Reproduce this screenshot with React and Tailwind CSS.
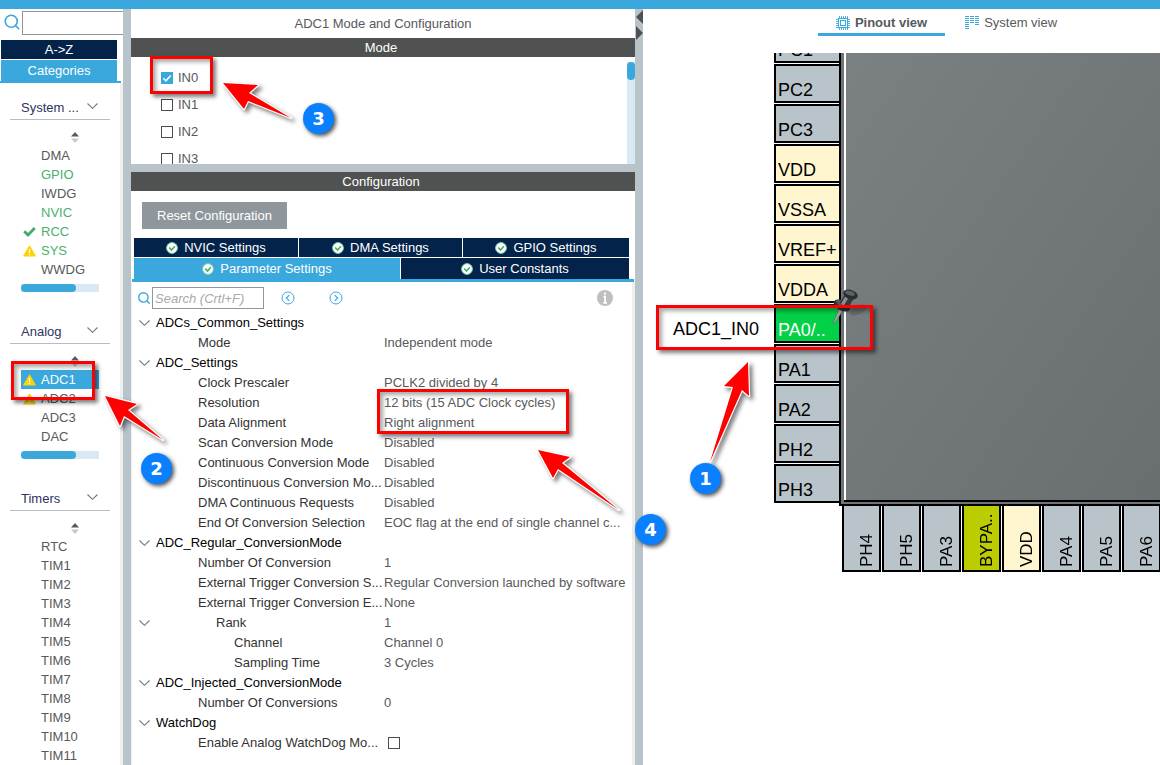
import { Search } from "lucide-react";

const GROUPS = [
  {
    name: "System ...",
    scrollbar: true,
    items: [
      { name: "DMA" },
      { name: "GPIO", used: true },
      { name: "IWDG" },
      { name: "NVIC", used: true },
      { name: "RCC", used: true, icon: "check" },
      { name: "SYS", used: true, icon: "warn" },
      { name: "WWDG" },
    ],
  },
  {
    name: "Analog",
    scrollbar: true,
    items: [
      { name: "ADC1", icon: "warn", selected: true },
      { name: "ADC2", icon: "warn" },
      { name: "ADC3" },
      { name: "DAC" },
    ],
  },
  {
    name: "Timers",
    items: ["RTC", "TIM1", "TIM2", "TIM3", "TIM4", "TIM5", "TIM6", "TIM7", "TIM8", "TIM9", "TIM10", "TIM11"].map((name) => ({ name })),
  },
];

const PARAMS = [
  { label: "ADCs_Common_Settings", level: 0, open: true },
  { label: "Mode", level: 1, value: "Independent mode" },
  { label: "ADC_Settings", level: 0, open: true },
  { label: "Clock Prescaler", level: 1, value: "PCLK2 divided by 4" },
  { label: "Resolution", level: 1, value: "12 bits (15 ADC Clock cycles)" },
  { label: "Data Alignment", level: 1, value: "Right alignment" },
  { label: "Scan Conversion Mode", level: 1, value: "Disabled" },
  { label: "Continuous Conversion Mode", level: 1, value: "Disabled" },
  { label: "Discontinuous Conversion Mo...", level: 1, value: "Disabled" },
  { label: "DMA Continuous Requests", level: 1, value: "Disabled" },
  { label: "End Of Conversion Selection", level: 1, value: "EOC flag at the end of single channel c..." },
  { label: "ADC_Regular_ConversionMode", level: 0, open: true },
  { label: "Number Of Conversion", level: 1, value: "1" },
  { label: "External Trigger Conversion S...", level: 1, value: "Regular Conversion launched by software" },
  { label: "External Trigger Conversion E...", level: 1, value: "None" },
  { label: "Rank", level: 2, value: "1", open: true },
  { label: "Channel", level: 3, value: "Channel 0" },
  { label: "Sampling Time", level: 3, value: "3 Cycles" },
  { label: "ADC_Injected_ConversionMode", level: 0, open: true },
  { label: "Number Of Conversions", level: 1, value: "0" },
  { label: "WatchDog", level: 0, open: true },
  { label: "Enable Analog WatchDog Mo...", level: 1, checkbox: true },
];

const INDENT = ["pl-[7px]", "pl-[49px]", "pl-[67px]", "pl-[85px]"];

const PIN_COLORS = {
  io: "bg-[#b9c4ca] text-black",
  power: "bg-[#fff6cf] text-black",
  active: "bg-[#02d046] text-white",
  special: "bg-[#bbcc00] text-black",
};

const LEFT_PINS = [
  { name: "PC1", kind: "io" },
  { name: "PC2", kind: "io" },
  { name: "PC3", kind: "io" },
  { name: "VDD", kind: "power" },
  { name: "VSSA", kind: "power" },
  { name: "VREF+", kind: "power" },
  { name: "VDDA", kind: "power" },
  { name: "PA0/..", kind: "active", signal: "ADC1_IN0" },
  { name: "PA1", kind: "io" },
  { name: "PA2", kind: "io" },
  { name: "PH2", kind: "io" },
  { name: "PH3", kind: "io" },
];

const BOTTOM_PINS = [
  { name: "PH4", kind: "io" },
  { name: "PH5", kind: "io" },
  { name: "PA3", kind: "io" },
  { name: "BYPA..", kind: "special" },
  { name: "VDD", kind: "power" },
  { name: "PA4", kind: "io" },
  { name: "PA5", kind: "io" },
  { name: "PA6", kind: "io" },
];

function Chevron() {
  return (
    <svg className="w-[11px] h-[6px] shrink-0" viewBox="0 0 11 6" fill="none" stroke="#77797a" strokeWidth="1.1">
      <path d="M.5.5l5 4.8 5-4.8" />
    </svg>
  );
}

function Warning() {
  return (
    <svg className="w-[13px] h-[12px]" viewBox="0 0 13 12">
      <path d="M6.5.8L12.4 11H.6z" fill="#fdd208" stroke="#fdd208" strokeWidth="1" strokeLinejoin="round" />
      <path d="M6.5 4v4M6.5 9v1.3" stroke="#fff" strokeWidth="1.2" />
    </svg>
  );
}

function Check() {
  return (
    <svg className="w-[13px] h-[10px]" viewBox="0 0 13 10" fill="none" stroke="#3eac6c" strokeWidth="2.8">
      <path d="M1.2 4.2l3.8 3.8 6.8-7" />
    </svg>
  );
}

function StatusOk() {
  return (
    <svg className="w-3 h-3 shrink-0" viewBox="0 0 12 12" fill="none">
      <circle cx="6" cy="6" r="5.4" fill="#fff" stroke="#7fd0a0" strokeWidth="1" />
      <path d="M3.2 5.6l2.3 2.5 3.4-3.8" stroke="#3eac6c" strokeWidth="1.5" />
    </svg>
  );
}

function Sorter() {
  return (
    <svg className="w-2 h-[11px]" viewBox="0 0 8 11">
      <path d="M4 0l4 4.5H0z" fill="#58595b" />
      <path d="M0 6.5h8L4 11z" fill="#c6c8c9" />
    </svg>
  );
}

function Group({ group }) {
  return (
    <section className="shrink-0">
      <button className="flex items-center justify-between w-[100px] h-6 ml-[10px] pl-[11px] pr-3 border-b border-[#b3bfc7] text-[#2b3560]">
        {group.name}
        <span className="pb-1">
          <Chevron />
        </span>
      </button>
      <div className="h-[26px] pl-[71px] pt-3">
        <Sorter />
      </div>
      <ul>
        {group.items.map((it) => (
          <li
            key={it.name}
            className={`flex items-center h-[19px] ml-[21px] w-[78px] ${
              it.selected ? "bg-[#3aa8dc] text-white" : it.used ? "text-[#49b170]" : "text-[#58595b]"
            }`}
          >
            <span className="w-5 pl-[2px] shrink-0">
              {it.icon === "warn" && <Warning />}
              {it.icon === "check" && <Check />}
            </span>
            {it.name}
          </li>
        ))}
      </ul>
      {group.scrollbar && (
        <div className="mt-[5px] mb-7 ml-[21px] w-[78px] h-2 bg-[#d9e8f5]">
          <div className="w-[55px] h-2 rounded-full bg-[#3aa8dc]" />
        </div>
      )}
    </section>
  );
}

function Sidebar() {
  return (
    <aside className="flex flex-col min-h-0 overflow-hidden">
      <div className="flex items-start h-[31px] shrink-0 pt-[2px] pl-[3px]">
        <label htmlFor="ip-search" className="w-[19px] shrink-0 pt-[2px] text-[#3aa8dc]">
          <Search size={18} strokeWidth={2.2} />
        </label>
        <input id="ip-search" aria-label="Search" className="h-6 w-[120px] shrink-0 border border-[#8f969b] bg-white" />
      </div>
      <div className="flex flex-col shrink-0 gap-px text-white border-b-2 border-[#3aa8dc] mr-[2px]">
        <button className="h-[19px] ml-px mr-1 pt-px bg-[#03234b]">A-&gt;Z</button>
        <button className="h-[21px] ml-px mr-1 bg-[#3aa8dc]">Categories</button>
      </div>
      <div className="flex-1 min-h-0 pt-[13px] border-r-[3px] border-[#efefef] overflow-hidden">
        {GROUPS.map((g) => (
          <Group key={g.name} group={g} />
        ))}
      </div>
    </aside>
  );
}

function CheckInput({ id, label, checked }) {
  return (
    <span className="relative inline-flex w-3 h-3 shrink-0">
      <input
        id={id}
        aria-label={label}
        type="checkbox"
        defaultChecked={checked}
        className="peer appearance-none w-3 h-3 border border-[#4a4c4d] bg-white checked:bg-[#3aa8dc] checked:border-[#3aa8dc]"
      />
      <svg className="absolute inset-0 w-3 h-3 hidden peer-checked:block pointer-events-none" viewBox="0 0 12 12" fill="none" stroke="#fff" strokeWidth="1.5">
        <path d="M2.4 6.2l2.5 2.6 4.8-5.4" />
      </svg>
    </span>
  );
}

function ModePanel() {
  return (
    <div className="flex h-[107px] shrink-0 overflow-hidden pt-[5px]">
      <div className="flex-1 pl-[30px] pt-[2px]">
        {["IN0", "IN1", "IN2", "IN3"].map((ch, i) => (
          <div key={ch} className="flex items-center gap-[5px] h-[27px] text-[#58595b]">
            <CheckInput id={ch} checked={i === 0} />
            <label htmlFor={ch}>{ch}</label>
          </div>
        ))}
      </div>
      <div className="w-2 bg-[#d9e8f5]">
        <div className="w-2 h-[18px] rounded-full bg-[#3aa8dc]" />
      </div>
    </div>
  );
}

function Tab({ label, active }) {
  return (
    <button className={`flex items-center justify-center gap-[6px] pt-px ${active ? "bg-[#3aa8dc]" : "bg-[#03234b]"}`}>
      <StatusOk />
      {label}
    </button>
  );
}

function RoundArrow({ flip, label }) {
  return (
    <button aria-label={label}>
      <svg className="w-[14px] h-[14px]" viewBox="0 0 14 14" fill="none" stroke="#3aa8dc">
        <circle cx="7" cy="7" r="6" />
        <path d={flip ? "M5.8 4.2L8.6 7l-2.8 2.8" : "M8.2 4.2L5.4 7l2.8 2.8"} strokeWidth="1.2" />
      </svg>
    </button>
  );
}

function ParamTable() {
  return (
    <table className="w-full table-fixed">
      <colgroup>
        <col className="w-[17px]" />
        <col className="w-[235px]" />
        <col />
      </colgroup>
      <tbody>
        {PARAMS.map((p, i) => (
          <tr key={i} className="h-5">
            <td className="p-0 pl-[7px]">
              {p.open && <Chevron />}
            </td>
            <td className={`p-0 whitespace-nowrap ${INDENT[p.level]} ${p.level === 0 ? "text-black" : "text-[#333333]"}`}>{p.label}</td>
            <td className="p-0 whitespace-nowrap text-[#58595b]">
              {p.checkbox ? (
                <span className="flex pl-1">
                  <CheckInput id="awd" label="Enable Analog WatchDog Mode" />
                </span>
              ) : (
                p.value
              )}
            </td>
          </tr>
        ))}
      </tbody>
    </table>
  );
}

function ConfigPanel() {
  return (
    <div className="flex flex-col flex-1 min-h-0">
      <button className="self-start h-[27px] px-[15px] mt-[11px] ml-[11px] bg-[#90979c] text-white">Reset Configuration</button>
      <div className="mt-[9px] ml-px mr-px pl-[2px] pr-[5px] border-b-[3px] border-[#3aa8dc] text-white">
        <div className="grid grid-cols-[164fr_163fr_166fr] gap-px h-[19px]">
          <Tab label="NVIC Settings" />
          <Tab label="DMA Settings" />
          <Tab label="GPIO Settings" />
        </div>
        <div className="grid grid-cols-[266fr_228fr] gap-px h-[21px] mt-px">
          <Tab label="Parameter Settings" active />
          <Tab label="User Constants" />
        </div>
      </div>
      <div className="flex-1 min-h-0 overflow-hidden border-r-[3px] border-l border-[#efefef]">
        <div className="flex items-center h-[31px] pl-[5px] pr-[19px] pt-px">
          <label htmlFor="param-search" className="w-[15px] text-[#3aa8dc]">
            <Search size={14} strokeWidth={2.4} />
          </label>
          <input
            id="param-search"
            placeholder="Search (Crtl+F)"
            className="w-[112px] h-[22px] pl-[2px] border border-[#90979c] italic placeholder:text-[#a9a9a9]"
          />
          <div className="flex flex-1 gap-[34px] pl-[17px]">
            <RoundArrow label="Previous" />
            <RoundArrow label="Next" flip />
          </div>
          <svg className="w-4 h-4" viewBox="0 0 16 16">
            <circle cx="8" cy="8" r="8" fill="#bfbfbf" />
            <path d="M8 2.6v2.2M6.4 6.6h1.7v6.2M6.2 12.8h3.8" stroke="#fff" strokeWidth="1.8" fill="none" />
          </svg>
        </div>
        <ParamTable />
      </div>
    </div>
  );
}

function ChipIcon() {
  return (
    <svg className="w-[14px] h-[14px]" viewBox="0 0 14 14" fill="none" stroke="#3aa8dc">
      <path d="M3.5 0v14M5.5 0v14M7.5 0v14M9.5 0v14M11.5 0v14M0 3.5h14M0 5.5h14M0 7.5h14M0 9.5h14M0 11.5h14" strokeWidth=".9" />
      <rect x="2.5" y="2.5" width="9" height="9" fill="#fff" />
      <rect x="4.5" y="4.5" width="5" height="5" />
    </svg>
  );
}

function SystemIcon() {
  return (
    <svg className="w-[14px] h-[14px]" viewBox="0 0 14 14" fill="none" stroke="#3aa8dc" strokeWidth="1">
      <path d="M0 .5h4M5 .5h4M10 .5h4M0 2.5h4M5 2.5h4M10 2.5h4M0 4.5h4M5 4.5h4M10 4.5h4M0 6.5h4M5 6.5h4M10 6.5h4M0 8.5h4M10 8.5h4M0 10.5h4M0 12.5h4" />
    </svg>
  );
}

function PushPin() {
  return (
    <svg className="absolute left-[189px] top-[234px] w-10 h-10" viewBox="0 0 40 40">
      <ellipse cx="26" cy="23" rx="9" ry="4.5" fill="#000" opacity=".13" transform="rotate(-25 26 23)" />
      <path d="M7.5 21l-6.5 15 1.5.5 9-14z" fill="#a3a7a8" stroke="#5b5e60" strokeWidth=".6" />
      <ellipse cx="10" cy="18.5" rx="9" ry="5" fill="#2f3132" transform="rotate(28 10 18.5)" />
      <ellipse cx="10.5" cy="16.8" rx="7" ry="3.2" fill="#55585a" transform="rotate(28 10.5 16.8)" />
      <path d="M13 7l9 4-5.5 9.5-9-4.5z" fill="#37393a" />
      <path d="M14 8l3 1.5-5 9-3-1.5z" fill="#8b8f91" />
      <ellipse cx="18.5" cy="7.5" rx="7.5" ry="4.5" fill="#2a2c2d" transform="rotate(18 18.5 7.5)" />
      <ellipse cx="18" cy="6.2" rx="5" ry="2.2" fill="#5e6163" transform="rotate(18 18 6.2)" />
    </svg>
  );
}

function Pinout() {
  return (
    <div className="relative flex-1 min-h-0 overflow-hidden text-[18px] leading-5 text-black">
      <div className="flex h-[453px]">
        <ul className="flex flex-col justify-end gap-px w-[196px] shrink-0 pb-[3px] overflow-hidden">
          {LEFT_PINS.map((p) => (
            <li key={p.name} className="flex h-[39px] shrink-0">
              <span className="flex items-end justify-end w-[131px] pr-[15px] pb-1">{p.signal}</span>
              <span className={`flex items-end w-[65px] pl-[2px] pb-px border-2 border-r-0 border-black ${PIN_COLORS[p.kind]}`}>{p.name}</span>
            </li>
          ))}
        </ul>
        <div className="flex-1 pl-[3px] pb-[2px] border-l-2 border-b-2 border-black bg-[#6f7576]">
          <div className="h-full border-b-2 border-black">
            <div className="h-full border-l-2 border-white bg-linear-to-br from-[#7b8083] to-[#696f70]" />
          </div>
        </div>
      </div>
      <ul className="flex gap-px pl-[199px] text-[17px]">
        {BOTTOM_PINS.map((p) => (
          <li key={p.name} className={`flex items-center w-[39px] h-[66px] shrink-0 border-2 border-t-0 border-black ${PIN_COLORS[p.kind]}`}>
            <span className="h-full pt-[3px] ml-[13px] [writing-mode:vertical-rl] rotate-180">{p.name}</span>
          </li>
        ))}
      </ul>
      <PushPin />
    </div>
  );
}

function Highlight({ className }) {
  return <div className={`absolute border-[3px] border-[#ff0000] shadow-[3px_3px_4px_rgba(0,0,0,0.5),inset_3px_3px_4px_rgba(0,0,0,0.35)] ${className}`} />;
}

function Step({ n, className }) {
  return (
    <span
      className={`absolute flex items-center justify-center w-[31px] h-[31px] rounded-full bg-[#0a80ff] text-white text-lg font-bold font-['DejaVu_Sans',sans-serif] shadow-[2px_2px_4px_rgba(0,0,0,0.7)] ${className}`}
    >
      {n}
    </span>
  );
}

const ARROWS = [
  "223,83 258,85 249,93 291,118 248,101 244,109",
  "105,396 137,404 128,410 163,440 124,416 120,426",
  "538,450 570,457 562,463 619,510 558,469 553,478",
  "748,362 749,396 742,390 710,462 733,387 724,386",
];

function Annotations() {
  return (
    <div className="absolute inset-0 overflow-hidden pointer-events-none">
      <Highlight className="left-[150px] top-[56px] w-[63px] h-[38px]" />
      <Highlight className="left-[11px] top-[361px] w-[84px] h-[39px]" />
      <Highlight className="left-[377px] top-[389px] w-[192px] h-[45px]" />
      <Highlight className="left-[656px] top-[305px] w-[217px] h-[45px]" />
      <svg className="absolute left-0 top-0 w-[1160px] h-[765px] drop-shadow-[3px_3px_2px_rgba(0,0,0,0.5)]" viewBox="0 0 1160 765">
        {ARROWS.map((points) => (
          <polygon key={points} points={points} fill="#ff0000" stroke="#fff" strokeWidth="2.4" strokeLinejoin="round" paintOrder="stroke" />
        ))}
      </svg>
      <Step n={1} className="left-[690px] top-[463px]" />
      <Step n={2} className="left-[141px] top-[453px]" />
      <Step n={3} className="left-[303px] top-[103px]" />
      <Step n={4} className="left-[635px] top-[514px]" />
    </div>
  );
}

export default function App() {
  return (
    <div className="relative flex flex-col h-screen overflow-hidden bg-white font-['Liberation_Sans',Arial,sans-serif] text-[13px] leading-[18px]">
      <div className="h-[9px] shrink-0 bg-[#3aa8dc]" />
      <div className="grid grid-cols-[123px_8px_minmax(0,504fr)_8px_minmax(0,517fr)] grid-rows-[minmax(0,1fr)] flex-1 min-h-0">
        <Sidebar />
        <div className="bg-[#b8c4ca]" />
        <main className="flex flex-col min-h-0">
          <h1 className="flex items-center justify-center h-[29px] shrink-0 text-[#58595b]">ADC1 Mode and Configuration</h1>
          <h2 className="h-[19px] shrink-0 pt-px pr-1 bg-[#4f5250] text-white text-center">Mode</h2>
          <ModePanel />
          <div className="h-2 shrink-0 bg-[#b8c4ca]" />
          <h2 className="h-[19px] shrink-0 pt-px pr-1 bg-[#4f5250] text-white text-center">Configuration</h2>
          <ConfigPanel />
        </main>
        <div className="bg-[#b8c4ca]">
          <svg className="w-2 h-8" viewBox="0 0 8 32" fill="#4f5250">
            <path d="M8 1v14L1 8zM1 17v14l7-7z" />
          </svg>
        </div>
        <section className="flex flex-col min-h-0 text-[#58595b]">
          <nav className="flex items-start justify-center h-[44px] shrink-0 gap-5 pl-[72px]">
            <button className="flex items-center gap-[5px] h-[27px] pt-1 px-[18px] border-b-[3px] border-[#3aa8dc] font-bold">
              <ChipIcon />
              Pinout view
            </button>
            <button className="flex items-center gap-[5px] h-[27px] pt-px">
              <SystemIcon />
              System view
            </button>
          </nav>
          <Pinout />
        </section>
      </div>
      <Annotations />
    </div>
  );
}
